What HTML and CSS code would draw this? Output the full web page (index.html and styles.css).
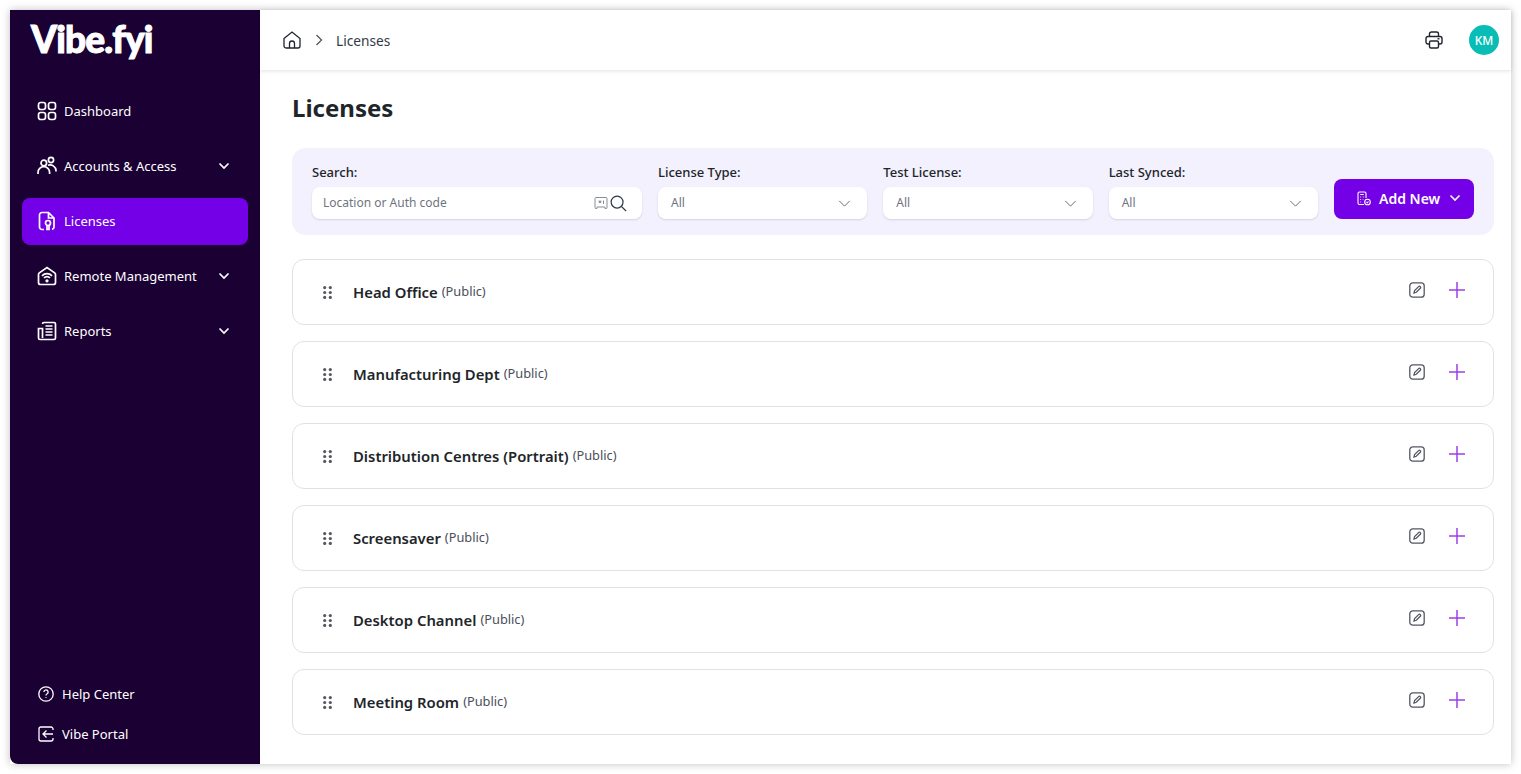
FILE: index.html
```html
<!DOCTYPE html>
<html lang="en">
<head>
  <meta charset="UTF-8">
  <meta name="viewport" content="width=device-width, initial-scale=1.0">
  <title>Licenses</title>
  <link rel="stylesheet" href="styles.css">
</head>
<body>
  <div class="app">
    <aside class="sidebar">
      <div class="logo">Vibe.fyi</div>
      <ul class="nav">
        <li class="nav-item">
          <svg class="nav-icon" viewBox="0 0 20 20"><rect x="1.500" y="1.500" width="7" height="7" rx="2.200"/><rect x="11.500" y="1.500" width="7" height="7" rx="2.200"/><rect x="1.500" y="11.500" width="7" height="7" rx="2.200"/><rect x="11.500" y="11.500" width="7" height="7" rx="2.200"/></svg>
          <span>Dashboard</span>
        </li>
        <li class="nav-item">
          <svg class="nav-icon" viewBox="0 0 20 20"><circle cx="6.800" cy="7" r="2.800"/><circle cx="14" cy="4" r="2.600"/><path d="M1 18v-1.500a5.800 5.800 0 0 1 11.600 0V18M11 9.200a6 6 0 0 1 8 5.300v1"/></svg>
          <span>Accounts &amp; Access</span>
          <svg class="nav-chevron" viewBox="0 0 12 8"><path d="M1.500 1.500 6 6l4.500-4.500"/></svg>
        </li>
        <li class="nav-item active">
          <svg class="nav-icon" viewBox="0 0 20 20"><path d="M7 18.500H5a2.500 2.500 0 0 1-2.500-2.500V4A2.500 2.500 0 0 1 5 1.500h6.500l5.500 5.500v9a2.500 2.500 0 0 1-2 2.400M11.500 1.500V7H17"/><circle cx="11" cy="12" r="2.500"/><path d="M10 14.500v4h2v-4"/></svg>
          <span>Licenses</span>
        </li>
        <li class="nav-item">
          <svg class="nav-icon" viewBox="0 0 20 20"><path d="M1.500 8.500a2 2 0 0 1 .8-1.600L10 1.500l7.700 5.400a2 2 0 0 1 .8 1.600v8a2 2 0 0 1-2 2h-13a2 2 0 0 1-2-2z"/><path d="M5 9.800a7 7 0 0 1 10 0M7 12a4 4 0 0 1 6 0"/><circle cx="10" cy="14.800" r=".8"/></svg>
          <span>Remote Management</span>
          <svg class="nav-chevron" viewBox="0 0 12 8"><path d="M1.500 1.500 6 6l4.500-4.500"/></svg>
        </li>
        <li class="nav-item">
          <svg class="nav-icon" viewBox="0 0 20 20"><path d="M5.500 3a1.500 1.500 0 0 1 1.500-1.500h10A1.500 1.500 0 0 1 18.500 3v14a1.500 1.500 0 0 1-1.500 1.500H3A1.500 1.500 0 0 1 1.500 17V7.500h4V17M8.500 5h7M8.500 8h7M8.500 11h7M8.500 14h7"/></svg>
          <span>Reports</span>
          <svg class="nav-chevron" viewBox="0 0 12 8"><path d="M1.500 1.500 6 6l4.500-4.500"/></svg>
        </li>
      </ul>
      <ul class="side-links">
        <li class="side-link">
          <svg class="side-icon" viewBox="0 0 16 16"><circle cx="8" cy="8" r="7.200"/><path d="M5.900 6a2.100 2.100 0 1 1 3.200 1.800c-.7.400-1.100.9-1.100 1.700"/><path d="M8 11.300v.8"/></svg>
          <span>Help Center</span>
        </li>
        <li class="side-link">
          <svg class="side-icon" viewBox="0 0 16 16"><path d="M15 4V3a2 2 0 0 0-2-2H3a2 2 0 0 0-2 2v10a2 2 0 0 0 2 2h10a2 2 0 0 0 2-2v-1M15 8H5M8.500 4.500 5 8l3.500 3.500"/></svg>
          <span>Vibe Portal</span>
        </li>
      </ul>
    </aside>

    <div class="main">
      <header class="topbar">
        <svg class="home-icon" viewBox="0 0 18 18"><path d="M1 7.500 9 1l8 6.500V15a2 2 0 0 1-2 2H3a2 2 0 0 1-2-2z"/><path d="M6.500 17v-4.500a2.500 2.500 0 0 1 5 0V17"/></svg>
        <svg class="crumb-sep" viewBox="0 0 8 12"><path d="M1.500 1 6.500 6l-5 5"/></svg>
        <span class="crumb">Licenses</span>
        <svg class="print-icon" viewBox="0 0 18 18"><path d="M4.500 5.500V3a2 2 0 0 1 2-2h5a2 2 0 0 1 2 2v2.500"/><path d="M4.500 13H3a2 2 0 0 1-2-2V7.500a2 2 0 0 1 2-2h12a2 2 0 0 1 2 2V11a2 2 0 0 1-2 2h-1.500"/><rect x="4.500" y="10" width="9" height="7" rx="1.500"/><path d="M12.500 7.800H14.500"/></svg>
        <div class="avatar">KM</div>
      </header>

      <div class="content">
        <h1 class="title">Licenses</h1>

        <div class="filters">
          <div class="field field-search">
            <label>Search:</label>
            <div class="control">
              <span class="placeholder">Location or Auth code</span>
              <svg class="code-icon" viewBox="0 0 14 14"><path d="M3 12.500H2a1 1 0 0 1-1-1V2.500a1 1 0 0 1 1-1h10a1 1 0 0 1 1 1v9a1 1 0 0 1-1 1h-1M3 12.500v-1.500h8v1.500"/><path d="M4.500 5.800h3M5.200 4.500l1.600 2.600M6.800 4.500 5.200 7.100M9.500 4.500V8"/></svg>
              <svg class="search-icon" viewBox="0 0 18 18"><circle cx="7.500" cy="7.500" r="6.300"/><path d="m12 12 5 5"/></svg>
            </div>
          </div>
          <div class="field">
            <label>License Type:</label>
            <div class="control">
              <span class="value">All</span>
              <svg class="select-chevron" viewBox="0 0 14 8"><path d="M1 1l6 6 6-6"/></svg>
            </div>
          </div>
          <div class="field">
            <label>Test License:</label>
            <div class="control">
              <span class="value">All</span>
              <svg class="select-chevron" viewBox="0 0 14 8"><path d="M1 1l6 6 6-6"/></svg>
            </div>
          </div>
          <div class="field">
            <label>Last Synced:</label>
            <div class="control">
              <span class="value">All</span>
              <svg class="select-chevron" viewBox="0 0 14 8"><path d="M1 1l6 6 6-6"/></svg>
            </div>
          </div>
          <button class="add-btn">
            <svg class="add-icon" viewBox="0 0 14 15"><path d="M7 13.500H2.500a1.500 1.500 0 0 1-1.500-1.500V2.500A1.500 1.500 0 0 1 2.500 1h5A1.500 1.500 0 0 1 9 2.500V7M3.300 3.500h3.400M3.300 6h.8M5.800 6h.9M3.300 8.500h.8M3.300 11h.8M5.800 8.500h.5"/><circle cx="10.500" cy="11" r="2.800"/><path d="M9.500 11l.8.8 1.200-1.300"/></svg>
            <span>Add New</span>
            <svg class="add-chevron" viewBox="0 0 12 8"><path d="M1.500 1.500 6 6l4.500-4.500"/></svg>
          </button>
        </div>

        <div class="rows" id="rows"></div>
      </div>
    </div>
  </div>

  <script>
    const names = ['Head Office', 'Manufacturing Dept', 'Distribution Centres (Portrait)', 'Screensaver', 'Desktop Channel', 'Meeting Room'];
    const rows = document.getElementById('rows');

    names.forEach(name => {
      const row = document.createElement('div');
      row.className = 'row';
      row.innerHTML = `
        <svg class="drag" viewBox="0 0 9 13"><circle cx="1.700" cy="1.600" r="1.600"/><circle cx="7.300" cy="1.600" r="1.600"/><circle cx="1.700" cy="6.500" r="1.600"/><circle cx="7.300" cy="6.500" r="1.600"/><circle cx="1.700" cy="11.400" r="1.600"/><circle cx="7.300" cy="11.400" r="1.600"/></svg>
        <span class="row-name">${name}</span>
        <span class="row-tag">(Public)</span>
        <svg class="edit-icon" viewBox="0 0 16 16"><rect x=".8" y=".8" width="14.400" height="14.400" rx="3"/><path d="M5 11l.6-2.400 4-4a1.200 1.200 0 0 1 1.700 1.700l-4 4z"/></svg>
        <svg class="plus-icon" viewBox="0 0 16 16"><path d="M8 0v16M0 8h16"/></svg>`;
      rows.appendChild(row);
    });
  </script>
</body>
</html>
```

FILE: styles.css
```css
body {
  font-family: "Noto Sans", "Open Sans", sans-serif;
  margin: 0;
  padding: 10px;
  height: 774px;
  box-sizing: border-box;
  background-color: #ffffff;
  overflow: hidden;
}
ul {
  list-style-type: none;
  margin: 0;
  padding: 0;
}
svg {
  fill: none;
  stroke: currentColor;
  flex-shrink: 0;
}
.app {
  display: flex;
  width: 1501px;
  height: 754px;
  background-color: #fff;
  box-shadow: 0 0 8px rgba(0, 0, 0, 0.25);
}
.sidebar {
  width: 250px;
  display: flex;
  flex-direction: column;
  background-color: #1a0033;
  color: #fff;
  border-bottom-left-radius: 8px;
  flex-shrink: 0;
}
.logo {
  height: 78px;
  padding: 6px 0 0 21px;
  box-sizing: border-box;
  font-family: "Lato", sans-serif;
  font-size: 37px;
  font-weight: 900;
  line-height: 46px;
  letter-spacing: -0.800px;
  -webkit-text-stroke: 1px #fff;
}
.nav {
  flex: 1;
  display: flex;
  flex-direction: column;
  gap: 8px;
  padding: 0 12px;
}
.nav-item {
  height: 47px;
  box-sizing: border-box;
  display: flex;
  align-items: center;
  padding: 0 18px 2px 15px;
  border-radius: 8px;
  font-size: 13px;
}
.nav-item.active {
  background-color: #7300e6;
}
.nav-icon {
  width: 20px;
  height: 20px;
  margin-right: 7px;
  stroke-width: 1.700;
}
.nav-chevron {
  width: 12px;
  height: 8px;
  margin-left: auto;
  stroke-width: 1.700;
}
.side-links {
  padding: 0 0 10px 28px;
}
.side-link {
  height: 40px;
  display: flex;
  align-items: center;
  gap: 8px;
  font-size: 13px;
}
.side-icon {
  width: 16px;
  height: 16px;
  stroke-width: 1.300;
}
.main {
  flex: 1;
  display: flex;
  flex-direction: column;
  min-width: 0;
}
.topbar {
  height: 60px;
  display: flex;
  align-items: center;
  padding: 0 12px 0 23px;
  box-shadow: 0 1px 4px rgba(0, 0, 0, 0.12);
  color: #1f2430;
}
.home-icon {
  width: 18px;
  height: 18px;
  stroke-width: 1.300;
}
.crumb-sep {
  width: 8px;
  height: 12px;
  margin-left: 14px;
  stroke: #555;
  stroke-width: 1.300;
}
.crumb {
  margin-left: 13px;
  padding-top: 1px;
  font-size: 13.700px;
  color: #333a47;
}
.print-icon {
  width: 18px;
  height: 18px;
  margin-left: auto;
  stroke-width: 1.400;
}
.avatar {
  width: 30px;
  height: 30px;
  margin-left: 26px;
  display: flex;
  justify-content: center;
  align-items: center;
  border-radius: 50%;
  background-color: #07bdb5;
  color: #fff;
  font-size: 12px;
  font-weight: 500;
}
.content {
  padding: 20px 17px 0 32px;
}
.title {
  margin: 0 0 22px 0;
  font-size: 24px;
  line-height: 36px;
  font-weight: 700;
  color: #212529;
}
.filters {
  display: flex;
  align-items: flex-end;
  gap: 16px;
  height: 87px;
  box-sizing: border-box;
  padding: 0 20px 16px;
  background-color: #f3f1fd;
  border-radius: 14px;
}
.field {
  flex: 1;
  min-width: 0;
}
.field-search {
  flex: none;
  width: 330px;
}
.field label {
  display: block;
  margin-bottom: 6px;
  font-size: 13px;
  line-height: 17px;
  font-weight: 500;
  color: #212529;
}
.control {
  height: 32px;
  box-sizing: border-box;
  display: flex;
  align-items: center;
  padding: 0 12px 2px 13px;
  background-color: #fff;
  border-radius: 8px;
  box-shadow: 0 1px 2px rgba(60, 50, 90, 0.16);
  font-size: 12px;
}
.placeholder,
.value {
  flex: 1;
  color: #6f7480;
}
.field-search .control {
  padding-left: 11px;
  padding-bottom: 0;
}
.field-search .placeholder {
  padding-bottom: 2px;
}
.code-icon {
  width: 14px;
  height: 14px;
  color: #8a8d94;
  stroke-width: 1;
}
.search-icon {
  width: 17px;
  height: 17px;
  margin: 0 3px 0 2px;
  color: #2b3a4a;
  stroke-width: 1.300;
}
.select-chevron {
  width: 13px;
  height: 7px;
  margin: 2px 4px 0 0;
  color: #5f6b7a;
  stroke-width: 1.100;
}
.add-btn {
  width: 140px;
  height: 40px;
  flex-shrink: 0;
  display: flex;
  align-items: center;
  padding: 0 0 2px 23px;
  border: none;
  border-radius: 8px;
  background-color: #7300e6;
  color: #fff;
  font-family: inherit;
  font-size: 14px;
  font-weight: 600;
}
.add-icon {
  width: 14px;
  height: 15px;
  margin-right: 8px;
  stroke-width: 1.100;
}
.add-chevron {
  width: 12px;
  height: 8px;
  margin-left: 9px;
  stroke-width: 1.600;
}
.rows {
  display: flex;
  flex-direction: column;
  gap: 16px;
  margin-top: 24px;
}
.row {
  height: 66px;
  box-sizing: border-box;
  display: flex;
  align-items: center;
  padding: 0 28px 0 30px;
  background-color: #fff;
  border: 1px solid #e2e2e6;
  border-radius: 12px;
}
.drag {
  width: 9px;
  height: 13px;
  fill: #55585f;
  stroke: none;
  margin-right: 21px;
}
.row-name {
  font-size: 14.850px;
  font-weight: 600;
  color: #212529;
}
.row-tag {
  margin-left: 4px;
  margin-bottom: 2px;
  font-size: 12.800px;
  color: #4a4f5a;
}
.edit-icon {
  width: 16px;
  height: 16px;
  margin-left: auto;
  margin-bottom: 4px;
  color: #545763;
  stroke-width: 1.300;
}
.plus-icon {
  width: 16px;
  height: 16px;
  margin-left: 24px;
  margin-bottom: 4px;
  color: #9b40e8;
  stroke-width: 1.500;
}
```
